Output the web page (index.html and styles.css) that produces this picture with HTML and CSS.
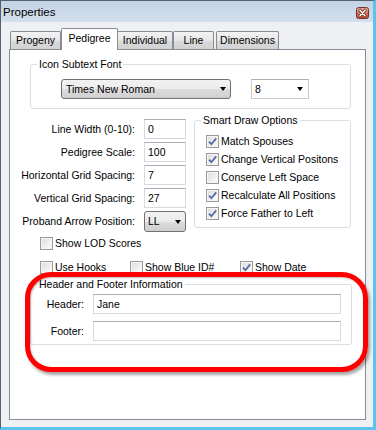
FILE: index.html
```html
<!DOCTYPE html>
<html>
<head>
<meta charset="utf-8">
<link rel="stylesheet" href="styles.css">
</head>
<body>
<div class="window">
  <div class="titlebar">
    <span class="title">Properties</span>
    <span class="close"><svg width="13" height="12" viewBox="0 0 13 12"><defs><linearGradient id="cg" x1="0" y1="0" x2="0" y2="1"><stop offset="0" stop-color="#eeb0a2"/><stop offset="0.5" stop-color="#d8735e"/><stop offset="1" stop-color="#c04a33"/></linearGradient></defs><rect x="0.5" y="0.5" width="12" height="11" rx="2" fill="url(#cg)" stroke="#7a3026"/><path d="M4 3.2 L9 8.8 M9 3.2 L4 8.8" stroke="#5a1d16" stroke-width="3" stroke-linecap="round"/><path d="M4 3.2 L9 8.8 M9 3.2 L4 8.8" stroke="#ffffff" stroke-width="1.6" stroke-linecap="round"/></svg></span>
  </div>
  <div class="client">
    <div class="tabs">
      <div class="tab t-progeny">Progeny</div>
      <div class="tab t-pedigree active">Pedigree</div>
      <div class="tab t-individual">Individual</div>
      <div class="tab t-line">Line</div>
      <div class="tab t-dimensions">Dimensions</div>
    </div>
    <div class="panel">
      <fieldset class="group g-font">
        <legend>Icon Subtext Font</legend>
        <div class="font-row">
          <div class="combo combo-btn w-font"><span>Times New Roman</span><i class="arrow"></i></div>
          <div class="combo combo-edit w-size"><span>8</span><i class="arrow"></i></div>
        </div>
      </fieldset>
      <div class="mid">
        <div class="fields">
          <label>Line Width (0-10):</label><div class="box">0</div>
          <label>Pedigree Scale:</label><div class="box">100</div>
          <label>Horizontal Grid Spacing:</label><div class="box">7</div>
          <label>Vertical Grid Spacing:</label><div class="box">27</div>
          <label class="tall">Proband Arrow Position:</label><div class="combo combo-btn w-small tall"><span>LL</span><i class="arrow"></i></div>
        </div>
        <fieldset class="group g-smart">
          <legend>Smart Draw Options</legend>
          <div class="smart-list">
            <div class="check"><span class="cb"><svg width="11" height="11" viewBox="0 0 11 11"><path d="M2 5.6 L4.4 8.2 L9.2 2.4" fill="none" stroke="#5569a6" stroke-width="1.8"/></svg></span>Match Spouses</div>
            <div class="check"><span class="cb"><svg width="11" height="11" viewBox="0 0 11 11"><path d="M2 5.6 L4.4 8.2 L9.2 2.4" fill="none" stroke="#5569a6" stroke-width="1.8"/></svg></span>Change Vertical Positons</div>
            <div class="check"><span class="cb"></span>Conserve Left Space</div>
            <div class="check"><span class="cb"><svg width="11" height="11" viewBox="0 0 11 11"><path d="M2 5.6 L4.4 8.2 L9.2 2.4" fill="none" stroke="#5569a6" stroke-width="1.8"/></svg></span>Recalculate All Positions</div>
            <div class="check"><span class="cb"><svg width="11" height="11" viewBox="0 0 11 11"><path d="M2 5.6 L4.4 8.2 L9.2 2.4" fill="none" stroke="#5569a6" stroke-width="1.8"/></svg></span>Force Father to Left</div>
          </div>
        </fieldset>
      </div>
      <div class="check lod"><span class="cb"></span>Show LOD Scores</div>
      <div class="opts">
        <div class="check o-hooks"><span class="cb"></span>Use Hooks</div>
        <div class="check o-blue"><span class="cb"></span>Show Blue ID#</div>
        <div class="check"><span class="cb"><svg width="11" height="11" viewBox="0 0 11 11"><path d="M2 5.6 L4.4 8.2 L9.2 2.4" fill="none" stroke="#5569a6" stroke-width="1.8"/></svg></span>Show Date</div>
      </div>
      <fieldset class="group g-hf">
        <legend>Header and Footer Information</legend>
        <div class="hf-grid">
          <label>Header:</label><div class="box">Jane</div>
          <label>Footer:</label><div class="box"></div>
        </div>
      </fieldset>
    </div>
  </div>
  <div class="annotation"></div>
</div>
</body>
</html>
```

FILE: styles.css
```css
* { box-sizing: border-box; }
html, body { margin: 0; padding: 0; background: #ffffff; }
body {
  font-family: "Liberation Sans", Arial, sans-serif;
  font-size: 10.5px;
  color: #000;
}
.window {
  position: relative;
  width: 376px;
  height: 430px;
  background: #eef0f3;
  border-left: 1px solid #56606d;
  border-top: 1px solid #56606d;
  border-right: 3px solid #5cc3ec;
  border-bottom: 3px solid #5cc3ec;
  display: flex;
  flex-direction: column;
}
.titlebar {
  height: 21px;
  flex: none;
  display: flex;
  align-items: center;
  justify-content: space-between;
  padding-left: 2px;
  padding-right: 4px;
  background: linear-gradient(#c2d3e6, #d3dfec);
}
.title { font-size: 11.5px; margin-top: 1px; }
.close { display: flex; margin-top: 2px; }
.client {
  flex: 1;
  padding: 6px 0 0 8px;
}
.tabs {
  display: flex;
  align-items: flex-end;
  height: 22px;
  margin-left: 1px;
  margin-bottom: -1px;
  position: relative;
  z-index: 1;
}
.tab {
  height: 18px;
  line-height: 17px;
  margin-bottom: 1px;
  text-align: center;
  border: 1px solid #898c95;
  border-bottom: none;
  border-radius: 2px 2px 0 0;
  background: linear-gradient(#f3f3f3, #e6e6e6 50%, #dadada 51%, #d2d2d2);
  white-space: nowrap;
}
.tab.active {
  height: 22px;
  line-height: 18px;
  margin-bottom: 0;
  background: #fff;
}
.t-progeny { width: 51px; }
.t-pedigree { width: 57px; }
.t-individual { width: 56px; margin-left: -1px; }
.t-line { width: 41px; }
.t-dimensions { width: 63px; margin-left: 2px; }
.panel {
  width: 357px;
  height: 371px;
  background: #fff;
  border: 1px solid #898c95;
}
.group {
  margin: 0;
  padding: 0;
  min-width: 0;
  border: 1px solid #d5dfe5;
  border-radius: 3px;
}
.group legend {
  padding: 0 2px;
  margin-left: 6px;
  line-height: 12px;
  font-size: 10.5px;
}
.g-font {
  margin: 8px 0 0 20px;
  width: 321px;
}
.font-row {
  display: flex;
  gap: 20px;
  margin: 9px 0 9px 30px;
}
.combo {
  height: 20px;
  display: flex;
  align-items: center;
  justify-content: space-between;
  white-space: nowrap;
}
.combo-btn {
  border: 1px solid #707070;
  border-radius: 3px;
  background: linear-gradient(#f2f2f2, #ebebeb 50%, #dddddd 51%, #cfcfcf);
  padding: 0 4px 0 4px;
}
.combo-edit {
  border: 1px solid #c6cad1;
  border-top-color: #abadb3;
  background: #fff;
  padding: 0 5px 0 3px;
}
.arrow {
  width: 0;
  height: 0;
  border-left: 3.5px solid transparent;
  border-right: 3.5px solid transparent;
  border-top: 4px solid #000;
}
.w-font { width: 170px; }
.w-size { width: 58px; }
.w-small { width: 42px; padding-left: 3px; }
.mid {
  display: flex;
  align-items: flex-start;
  margin-top: 5px;
}
.fields {
  display: grid;
  grid-template-columns: 125px 42px;
  grid-auto-rows: 20px;
  column-gap: 9px;
  row-gap: 3px;
  margin-top: 5px;
}
.fields label, .hf-grid label {
  text-align: right;
  line-height: 20px;
  white-space: nowrap;
}
.fields .tall { height: 21px; line-height: 21px; }
.box {
  height: 20px;
  line-height: 18px;
  padding-left: 3px;
  border: 1px solid #d6d9df;
  border-top-color: #abadb3;
  background: #fff;
}
.g-smart {
  margin-left: 8px;
  width: 157px;
}
.smart-list {
  padding: 6px 0 5px 11px;
}
.check {
  display: flex;
  align-items: center;
  height: 18px;
  white-space: nowrap;
}
.cb {
  width: 13px;
  height: 13px;
  flex: none;
  margin-right: 2px;
  border: 1px solid #9a9a9a;
  background: linear-gradient(135deg, #dadada, #f0f0f0 60%, #fdfdfd);
  box-shadow: inset 0 0 0 1px #f6f6f6;
  display: flex;
  align-items: center;
  justify-content: center;
}
.lod {
  margin: 3px 0 0 30px;
}
.opts {
  display: flex;
  margin: 6px 0 0 30px;
}
.o-hooks { width: 90px; }
.o-blue { width: 110px; }
.g-hf {
  margin: 2px 0 0 20px;
  width: 322px;
}
.hf-grid {
  display: grid;
  grid-template-columns: 53px 248px;
  grid-auto-rows: 20px;
  column-gap: 9px;
  row-gap: 7px;
  padding: 4px 0 3px 0;
}
.annotation {
  position: absolute;
  left: 24px;
  top: 271px;
  width: 343px;
  height: 100px;
  border: 5px solid #ff0000;
  border-radius: 26px;
  box-shadow: 2px 3px 3px rgba(0, 0, 0, 0.35), inset 1px 1px 2px rgba(0,0,0,0.25);
}
```
